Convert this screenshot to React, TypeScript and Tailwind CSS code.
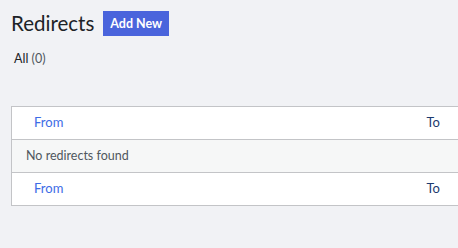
export default function App() {
  return (
    <div
      className="w-[458px] h-[248px] overflow-hidden bg-[#f1f2f5] text-[#1d2327]"
      style={{ fontFamily: 'Lato, "Noto Sans", sans-serif' }}
    >
      <div className="pl-[11px] pt-[8px]">
        <div className="flex items-center gap-[9px]">
          <h1 className="text-[20.5px] leading-[30px] font-normal text-[#1d2327]">Redirects</h1>
          <button className="h-[25px] px-[7px] bg-[#4a64dc] text-white text-[12.5px] font-bold leading-[25px]">
            Add New
          </button>
        </div>
        <div className="mt-[13px] pl-[3px] text-[12.5px] leading-[16px]">
          All <span className="text-[#50575e]">(0)</span>
        </div>
        <div className="mt-[39px] w-[480px] border border-[#c3c4c7] bg-white text-[13px]">
          <div className="flex items-center justify-between h-[33px] border-b border-[#c3c4c7] pl-[22px] pr-[50px]">
            <span className="text-[#3d6ce6]">From</span>
            <span className="text-[#1d3a6e]">To</span>
          </div>
          <div className="flex items-center h-[33px] border-b border-[#c3c4c7] bg-[#f6f7f7] pl-[14px] text-[12.5px] text-[#50575e]">
            No redirects found
          </div>
          <div className="flex items-center justify-between h-[32px] pl-[22px] pr-[50px]">
            <span className="text-[#3d6ce6]">From</span>
            <span className="text-[#1d3a6e]">To</span>
          </div>
        </div>
      </div>
    </div>
  );
}
